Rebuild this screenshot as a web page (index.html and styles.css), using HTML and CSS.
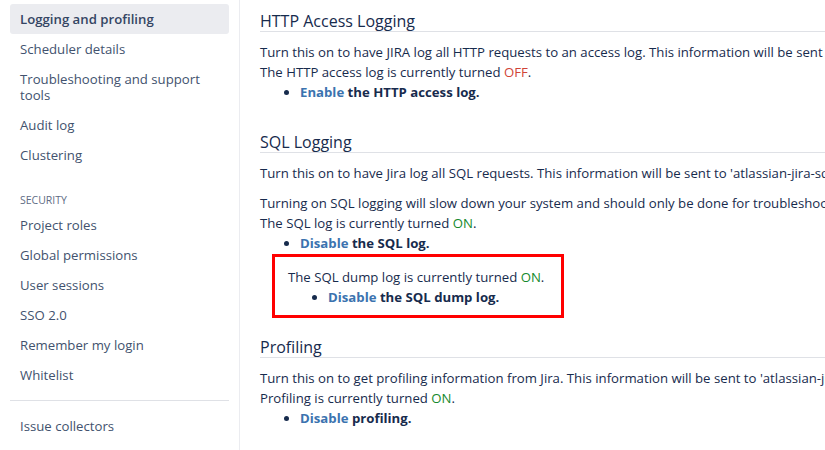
FILE: index.html
```html
<!DOCTYPE html>
<html lang="en">
<head>
<meta charset="utf-8">
<title>Logging and profiling</title>
<link rel="stylesheet" href="styles.css">
</head>
<body>
<div class="layout">
  <nav class="sidebar">
    <a class="nav-item selected">Logging and profiling</a>
    <a class="nav-item">Scheduler details</a>
    <a class="nav-item">Troubleshooting and support tools</a>
    <a class="nav-item">Audit log</a>
    <a class="nav-item">Clustering</a>
    <div class="nav-group">Security</div>
    <a class="nav-item">Project roles</a>
    <a class="nav-item">Global permissions</a>
    <a class="nav-item">User sessions</a>
    <a class="nav-item">SSO 2.0</a>
    <a class="nav-item">Remember my login</a>
    <a class="nav-item">Whitelist</a>
    <hr class="nav-divider">
    <a class="nav-item">Issue collectors</a>
  </nav>
  <main class="content">
    <section class="section first">
      <h2 class="section-title">HTTP Access Logging</h2>
      <p class="para">Turn this on to have JIRA log all HTTP requests to an access log. This information will be sent to 'atlassian-jira-http-access.log'.<br>The HTTP access log is currently turned <span class="off">OFF</span>.</p>
      <ul class="actions">
        <li><a class="link">Enable</a> the HTTP access log.</li>
      </ul>
    </section>
    <section class="section">
      <h2 class="section-title">SQL Logging</h2>
      <p class="para">Turn this on to have Jira log all SQL requests. This information will be sent to 'atlassian-jira-sql.log'.</p>
      <p class="para">Turning on SQL logging will slow down your system and should only be done for troubleshooting purposes.<br>The SQL log is currently turned <span class="on">ON</span>.</p>
      <ul class="actions">
        <li><a class="link">Disable</a> the SQL log.</li>
      </ul>
      <div class="dump-box">
        <p class="para">The SQL dump log is currently turned <span class="on">ON</span>.</p>
        <ul class="actions">
          <li><a class="link">Disable</a> the SQL dump log.</li>
        </ul>
      </div>
    </section>
    <section class="section after-box">
      <h2 class="section-title">Profiling</h2>
      <p class="para">Turn this on to get profiling information from Jira. This information will be sent to 'atlassian-jira.log'.<br>Profiling is currently turned <span class="on">ON</span>.</p>
      <ul class="actions">
        <li><a class="link">Disable</a> profiling.</li>
      </ul>
    </section>
  </main>
</div>
</body>
</html>
```

FILE: styles.css
```css
html, body {
  margin: 0;
  padding: 0;
  background: #ffffff;
  overflow: hidden;
}
body {
  font-family: "Open Sans", "Noto Sans", sans-serif;
  font-size: 13.2px;
  color: #172b4d;
  width: 825px;
  height: 450px;
}
.layout {
  display: flex;
  height: 450px;
}
.sidebar {
  box-sizing: border-box;
  width: 240px;
  flex: 0 0 240px;
  padding: 4px 10px 0;
  border-right: 1px solid #ebecf0;
  display: flex;
  flex-direction: column;
}
.nav-item {
  display: block;
  padding: 7px 10px;
  line-height: 16px;
  color: #42526e;
  border-radius: 3px;
  text-decoration: none;
}
.nav-item.selected {
  background: #ebecf0;
  font-weight: 600;
  color: #344563;
}
.nav-group {
  margin: 22px 10px 2px;
  line-height: 16px;
  font-size: 10.5px;
  text-transform: uppercase;
  color: #5e6c84;
  font-weight: 500;
}
.nav-divider {
  border: 0;
  border-top: 1px solid #dfe1e6;
  margin: 10px 0;
}
.content {
  flex: 1;
  min-width: 0;
  padding: 12px 0 0 20px;
  white-space: nowrap;
}
.section {
  margin-top: 31px;
}
.section.first {
  margin-top: 0;
}
.section.after-box {
  margin-top: 20px;
}
.section-title {
  margin: 0 0 10px;
  font-size: 16px;
  font-weight: 500;
  line-height: 19px;
  border-bottom: 1px solid #dfe1e6;
  color: #172b4d;
}
.para {
  margin: 0 0 10px;
  line-height: 20px;
}
.actions {
  margin: -10px 0 0;
  padding-left: 40px;
  line-height: 20px;
  font-weight: 700;
}
.link {
  color: #3b73af;
  text-decoration: none;
}
.off {
  color: #d04437;
}
.on {
  color: #14892c;
}
.dump-box {
  box-sizing: border-box;
  width: 292px;
  margin: 1px 0 0 12px;
  padding: 10px 13px 8px;
  border: 3px solid #ff0000;
}
.dump-box .para {
  margin-bottom: 0;
}
.dump-box .actions {
  margin-top: 0;
}
```
